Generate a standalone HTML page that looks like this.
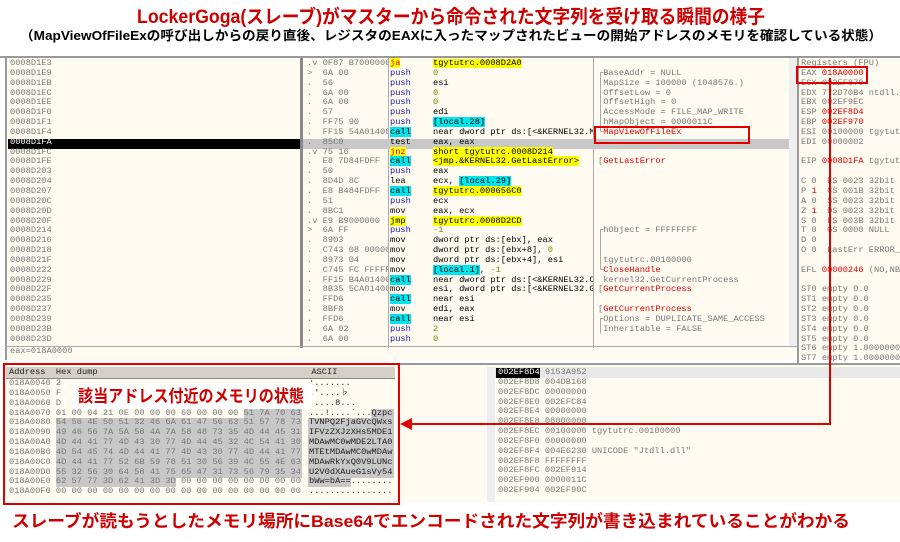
<!DOCTYPE html>
<html><head><meta charset="utf-8"><style>
body{margin:0;width:900px;height:542px;background:#fff;position:relative;overflow:hidden;font-family:"Liberation Mono","Noto Sans CJK JP",monospace;}
.a{position:absolute;white-space:pre;font-size:8.7px;line-height:9.85px;}
.g{color:#777}
.k{color:#222}
.bl{color:#1a1ab0}
.ol{color:#808000}
.r{color:#e00000}
.y{background:#ffff00}
.c{background:#00e5ee}
.yr{background:#ffff00;color:#e00000}
.sel{position:absolute;background:#c8c8c8}
</style></head><body>
<svg style="position:absolute;left:0;top:0" width="900" height="60">
<text x="137" y="23" textLength="628" lengthAdjust="spacingAndGlyphs" font-family="Liberation Sans,Noto Sans CJK JP,sans-serif" font-weight="bold" font-size="19" fill="#cc0000">LockerGoga(スレーブ)がマスターから命令された文字列を受け取る瞬間の様子</text>
<text x="20" y="40" textLength="862" lengthAdjust="spacingAndGlyphs" font-family="Liberation Sans,Noto Sans CJK JP,sans-serif" font-weight="bold" font-size="13" fill="#000">（MapViewOfFileExの呼び出しからの戻り直後、レジスタのEAXに入ったマップされたビューの開始アドレスのメモリを確認している状態）</text>
<rect x="0" y="56" width="900" height="2" fill="#999"/>
</svg>
<div style="position:absolute;left:5px;top:58px;width:895px;height:302px;background:#fffbf0;border-left:2px solid #999"></div>
<div style="position:absolute;left:300px;top:58px;width:3px;height:290px;background:#888"></div>
<div style="position:absolute;left:593px;top:58px;width:1px;height:290px;background:#aaa"></div>
<div style="position:absolute;left:388px;top:58px;width:1px;height:290px;background:#aaa"></div>
<div style="position:absolute;left:789px;top:58px;width:8px;height:290px;background:#eee"></div>
<div style="position:absolute;left:797px;top:58px;width:2px;height:305px;background:#999"></div>
<div style="position:absolute;left:5px;top:346px;width:792px;height:1px;background:#aaa"></div>
<div style="position:absolute;left:8px;top:139px;width:292px;height:10px;background:#000"></div>
<div style="position:absolute;left:303px;top:139px;width:486px;height:10px;background:#c8c8c8"></div>
<div class="a g" style="left:10px;top:59px">0008D1E3
0008D1E9
0008D1EB
0008D1EC
0008D1EE
0008D1F0
0008D1F1
0008D1F4
<span style="color:#fff">0008D1FA</span>
0008D1FC
0008D1FE
0008D203
0008D204
0008D207
0008D20C
0008D20D
0008D20F
0008D214
0008D216
0008D218
0008D21F
0008D222
0008D229
0008D22F
0008D235
0008D237
0008D239
0008D23B
0008D23D</div>
<div class="a g" style="left:307px;top:59px;width:81px;overflow:hidden">.v 0F87 B7000000
>  6A 00
.  56
.  6A 00
.  6A 00
.  57
.  FF75 90
.  FF15 54A01400
.  85C0
.v 75 16
.  E8 7D84FDFF
.  50
.  8D4D 8C
.  E8 B484FDFF
.  51
.  8BC1
.v E9 B9000000
>  6A FF
.  8903
.  C743 08 00000
.  8973 04
.  C745 FC FFFFF
.  FF15 B4A01400
.  8B35 5CA01400
.  FFD6
.  8BF8
.  FFD6
.  6A 02
.  6A 00</div>
<div class="a" style="left:390px;top:59px"><span class="yr">ja</span>
<span class="bl">push</span>
<span class="bl">push</span>
<span class="bl">push</span>
<span class="bl">push</span>
<span class="bl">push</span>
<span class="bl">push</span>
<span class="c">call</span>
test
<span class="yr">jnz</span>
<span class="c">call</span>
<span class="bl">push</span>
lea
<span class="c">call</span>
<span class="bl">push</span>
mov
<span class="y">jmp</span>
<span class="bl">push</span>
mov
mov
mov
mov
<span class="c">call</span>
mov
<span class="c">call</span>
mov
<span class="c">call</span>
<span class="bl">push</span>
<span class="bl">push</span></div>
<div class="a" style="left:433px;top:59px;width:160px;overflow:hidden"><span class="y">tgytutrc.0008D2A0</span>
<span class="ol">0</span>
esi
<span class="ol">0</span>
<span class="ol">0</span>
edi
<span class="c">[local.28]</span>
near dword ptr ds:[&lt;&amp;KERNEL32.Ma
eax, eax
<span class="y">short tgytutrc.0008D214</span>
<span class="y">&lt;jmp.&amp;KERNEL32.GetLastError&gt;</span>
eax
ecx, <span class="c">[local.29]</span>
<span class="y">tgytutrc.000656C0</span>
ecx
eax, ecx
<span class="y">tgytutrc.0008D2CD</span>
<span class="ol">-1</span>
dword ptr ds:[ebx], eax
dword ptr ds:[ebx+8], <span class="ol">0</span>
dword ptr ds:[ebx+4], esi
<span class="c">[local.1]</span>, <span class="ol">-1</span>
near dword ptr ds:[&lt;&amp;KERNEL32.Cl
esi, dword ptr ds:[&lt;&amp;KERNEL32.Ge
near esi
edi, eax
near esi
<span class="ol">2</span>
<span class="ol">0</span></div>
<div class="a g" style="left:598px;top:59px">
┌BaseAddr = NULL
│MapSize = 100000 (1048576.)
│OffsetLow = 0
│OffsetHigh = 0
│AccessMode = FILE_MAP_WRITE
│hMapObject = 0000011C
└<span class="r">MapViewOfFileEx</span>


[<span class="r">GetLastError</span>






┌hObject = FFFFFFFF
│
│
│tgytutrc.00100000
└<span class="r">CloseHandle</span>
 kernel32.GetCurrentProcess
[<span class="r">GetCurrentProcess</span>

[<span class="r">GetCurrentProcess</span>
┌Options = DUPLICATE_SAME_ACCESS
│Inheritable = FALSE</div>
<div style="position:absolute;left:594px;top:126px;width:152px;height:14px;border:2px solid #e00000"></div>
<div class="a g" style="left:10px;top:347px">eax=018A0000</div>
<div class="a g" style="left:801px;top:59px;width:99px;overflow:hidden">Registers (FPU)
EAX <span class="r">018A0000</span>
ECX 002EF870
EDX 772D70B4 ntdll.
EBX 002EF9EC
ESP <span class="r">002EF8D4</span>
EBP <span class="r">002EF970</span>
ESI 00100000 tgytut
EDI 00000002

EIP <span class="r">0008D1FA</span> tgytut

C 0  ES 0023 32bit
P <span class="r">1</span>  CS 001B 32bit
A 0  SS 0023 32bit
Z <span class="r">1</span>  DS 0023 32bit
S 0  FS 003B 32bit
T 0  GS 0000 NULL
D 0
O 0  LastErr ERROR_

EFL <span class="r">00000246</span> (NO,NB

ST0 empty 0.0
ST1 empty 0.0
ST2 empty 0.0
ST3 empty 0.0
ST4 empty 0.0
ST5 empty 0.0
ST6 empty 1.0000000
ST7 empty 1.0000000
                3 2
FST 4020  Cond 1 0</div>
<div style="position:absolute;left:796px;top:66px;width:68px;height:14px;border:2px solid #e00000"></div>
<div style="position:absolute;left:5px;top:363px;width:895px;height:2px;background:#999"></div>
<div style="position:absolute;left:5px;top:365px;width:390px;height:137px;background:#fffbf0"></div>
<div style="position:absolute;left:395px;top:365px;width:505px;height:137px;background:#fffbf0"></div>
<div style="position:absolute;left:487px;top:367px;width:8px;height:135px;background:#eee"></div>
<div style="position:absolute;left:6px;top:367px;width:389px;height:11px;background:#d4d0c8;border-bottom:1px solid #888"></div>
<div class="a k" style="left:9px;top:368px">Address  Hex dump                                         ASCII</div>
<div style="position:absolute;left:495px;top:367px;width:405px;height:11px;background:#e8e8e8"></div>
<div style="position:absolute;left:496px;top:368px;width:44px;height:10px;background:#000"></div>
<div class="sel" style="left:244px;top:409px;width:58px;height:10px"></div>
<div class="sel" style="left:56px;top:418px;width:246px;height:60px"></div>
<div class="sel" style="left:56px;top:477px;width:120px;height:10px"></div>
<div class="sel" style="left:371px;top:409px;width:23px;height:10px"></div>
<div class="sel" style="left:308px;top:418px;width:86px;height:60px"></div>
<div class="sel" style="left:308px;top:477px;width:43px;height:10px"></div>
<div class="a g" style="left:9px;top:379px">018A0040 2
018A0050 F
018A0060 D
018A0070 01 00 04 21 0E 00 00 00 60 00 00 00 51 7A 70 63
018A0080 54 56 4E 50 51 32 46 6A 61 47 56 63 51 57 78 73
018A0090 49 46 56 7A 5A 58 4A 7A 58 48 73 35 4D 44 45 31
018A00A0 4D 44 41 77 4D 43 30 77 4D 44 45 32 4C 54 41 30
018A00B0 4D 54 45 74 4D 44 41 77 4D 43 30 77 4D 44 41 77
018A00C0 4D 44 41 77 52 6B 59 78 51 30 56 39 4C 55 4E 63
018A00D0 55 32 56 30 64 58 41 75 65 47 31 73 56 79 35 34
018A00E0 62 57 77 3D 62 41 3D 3D 00 00 00 00 00 00 00 00
018A00F0 00 00 00 00 00 00 00 00 00 00 00 00 00 00 00 00</div>
<div class="a k" style="left:309px;top:379px">:.......
.'....♭
.....8...
...!....`...Qzpc
TVNPQ2FjaGVcQWxs
IFVzZXJzXHs5MDE1
MDAwMC0wMDE2LTA0
MTEtMDAwMC0wMDAw
MDAwRkYxQ0V9LUNc
U2V0dXAueG1sVy54
bWw=bA==........
................</div>
<div style="position:absolute;left:72px;top:383px;width:240px;height:26px;background:#fff"></div>
<svg style="position:absolute;left:0;top:0" width="900" height="542">
<text x="78" y="402" textLength="226" lengthAdjust="spacingAndGlyphs" font-family="Liberation Sans,Noto Sans CJK JP,sans-serif" font-weight="bold" font-size="17" fill="#cc0000">該当アドレス付近のメモリの状態</text>
<text x="12" y="527" textLength="838" lengthAdjust="spacingAndGlyphs" font-family="Liberation Sans,Noto Sans CJK JP,sans-serif" font-weight="bold" font-size="17" fill="#cc0000">スレーブが読もうとしたメモリ場所にBase64でエンコードされた文字列が書き込まれていることがわかる</text>
<rect x="4" y="364" width="395" height="140" fill="none" stroke="#e00000" stroke-width="2"/>
<polyline points="830,78 830,424 410,424" fill="none" stroke="#e00000" stroke-width="2"/>
<polygon points="400,424 412,418 412,430" fill="#e00000"/>
</svg>
<div class="a g" style="left:498px;top:368px"><span style="color:#fff">002EF8D4</span> 9153A952
002EF8D8 004DB168
002EF8DC 00000000
002EF8E0 002EFC84
002EF8E4 00000000
002EF8E8 08000000
002EF8EC 00100000 tgytutrc.00100000
002EF8F0 00000000
002EF8F4 004E6230 UNICODE "Jtdll.dll"
002EF8F8 FFFFFFFF
002EF8FC 002EF914
002EF900 0000011C
002EF904 002EF90C</div>
</body></html>
